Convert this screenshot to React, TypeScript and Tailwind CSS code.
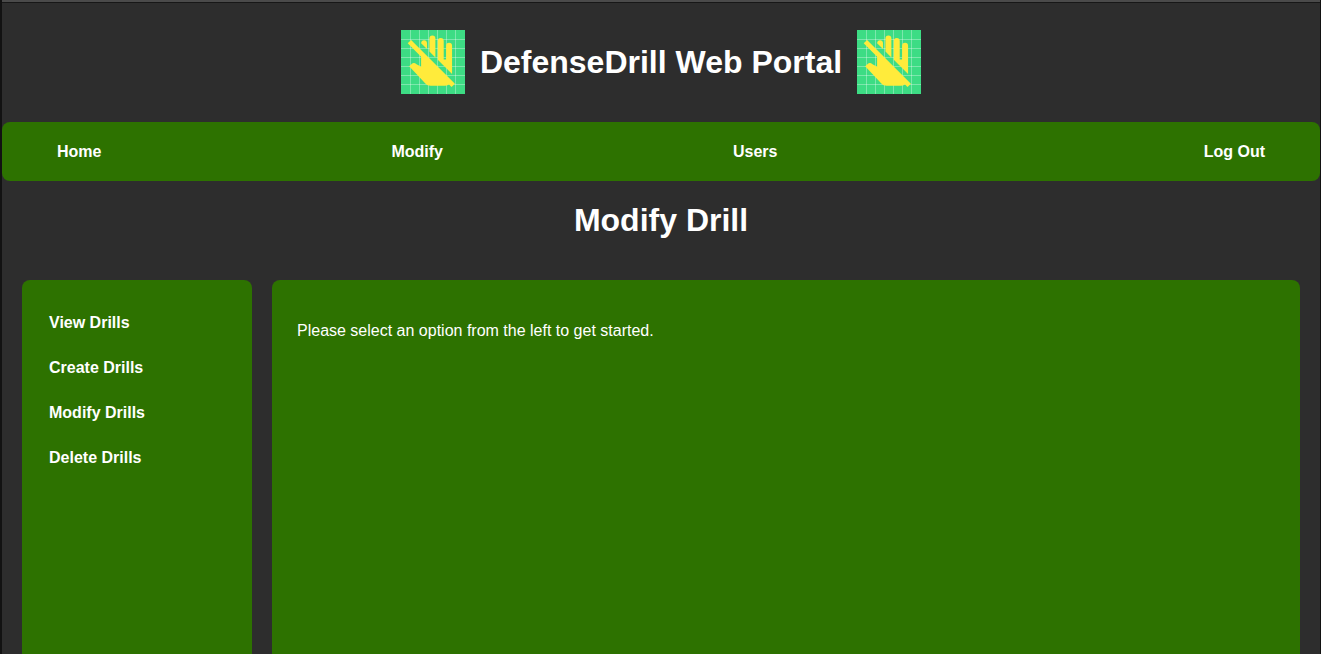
import React from "react";
import { MdDoNotTouch } from "react-icons/md";

const gridStops = [9.5, 18.5, 27.5, 36.5, 45.5, 54.5];
const drillLinks = ["View Drills", "Create Drills", "Modify Drills", "Delete Drills"];

function Logo() {
  return (
    <svg className="size-16 shrink-0" viewBox="0 0 64 64" aria-hidden="true">
      <rect width="64" height="64" fill="#3ddc84" />
      <g stroke="#ffffff" strokeOpacity="0.33" strokeWidth="1">
        {gridStops.map((n) => (
          <React.Fragment key={n}>
            <path d={`M${n} 0V64`} />
            <path d={`M0 ${n}H64`} />
          </React.Fragment>
        ))}
      </g>
      <MdDoNotTouch x="3.4" y="3.2" size={57.2} color="#ffeb3b" />
    </svg>
  );
}

export default function App() {
  return (
    <div className="flex h-[654px] flex-col overflow-hidden border-l-2 border-r border-[#121212] bg-[#2d2d2d] font-['Liberation_Sans',Arial,sans-serif] text-base text-white">
      <div className="h-[3px] shrink-0 border-b border-[#171717] bg-[#4a4a4a]" />
      <header className="flex h-[119px] shrink-0 items-center justify-center gap-[15px] pb-px">
        <Logo />
        <h1 className="text-[32px] leading-9 font-bold">DefenseDrill Web Portal</h1>
        <Logo />
      </header>
      <nav className="flex h-[59px] shrink-0 items-center rounded-lg bg-[#2d7200] px-[55px] font-bold">
        <div className="flex gap-[290px]">
          <a>Home</a>
          <a>Modify</a>
          <a>Users</a>
        </div>
        <a className="ml-auto">Log Out</a>
      </nav>
      <h2 className="mt-[21px] shrink-0 text-center text-[32px] leading-9 font-bold">Modify Drill</h2>
      <div className="mt-[42px] flex min-h-0 flex-1 gap-5 px-5">
        <aside className="flex w-[230px] shrink-0 flex-col gap-[21px] rounded-t-lg bg-[#2d7200] px-[27px] pt-[31px] font-bold">
          {drillLinks.map((label) => (
            <a key={label}>{label}</a>
          ))}
        </aside>
        <main className="flex-1 rounded-t-lg bg-[#2d7200] px-[25px] pt-[39px]">
          <p>Please select an option from the left to get started.</p>
        </main>
      </div>
    </div>
  );
}
